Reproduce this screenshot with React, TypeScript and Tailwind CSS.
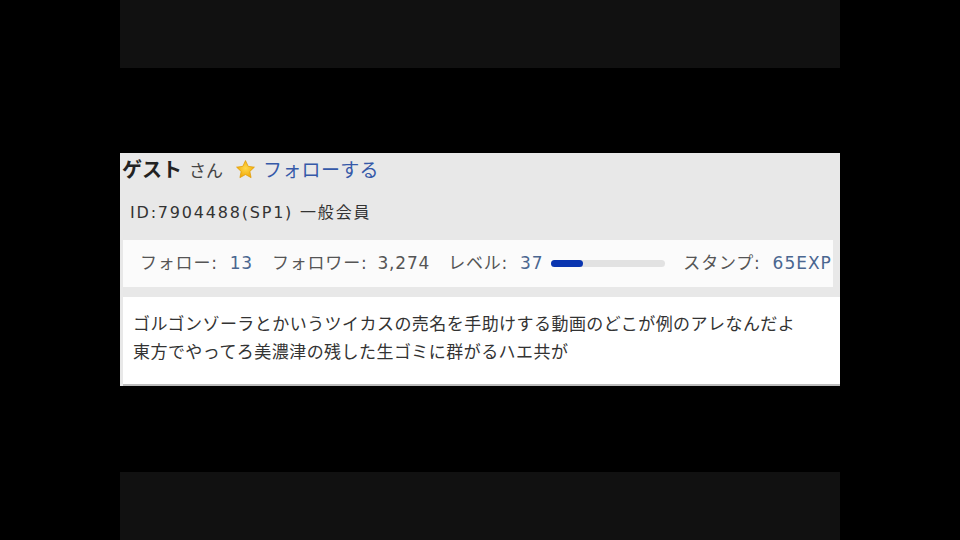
const jp = { fontFamily: '"DejaVu Sans", "Noto Sans CJK JP", sans-serif' };

function Star() {
  return (
    <svg width="21" height="21" viewBox="0 0 24 24" className="shrink-0">
      <defs>
        <radialGradient id="starFill" cx="50%" cy="45%" r="60%">
          <stop offset="0%" stopColor="#ffd84a" />
          <stop offset="100%" stopColor="#f0a400" />
        </radialGradient>
      </defs>
      <path
        d="M12 1.8l3.1 6.6 7.1.9-5.2 4.9 1.4 7.1L12 17.8l-6.4 3.5 1.4-7.1-5.2-4.9 7.1-.9z"
        fill="url(#starFill)"
        stroke="#e09a00"
        strokeWidth="0.8"
        strokeLinejoin="round"
      />
    </svg>
  );
}

export default function App() {
  return (
    <div className="flex h-[540px] w-[960px] flex-col items-center bg-black" style={jp}>
      <div className="h-[68px] w-[720px] bg-[#111111]" />
      <div className="h-[85px]" />

      <div className="flex h-[233px] w-[720px] flex-col bg-[#e8e8e8]">
        <div className="flex h-[30px] items-end pl-[2px]">
          <span className="text-[20px] leading-[26px] font-bold text-[#222]">ゲスト</span>
          <span className="ml-[7px] text-[17px] leading-[24px] text-[#444]">さん</span>
          <span className="ml-[12px] mb-[3px]">
            <Star />
          </span>
          <span className="ml-[7px] text-[19px] leading-[25px] tracking-[0.3px] text-[#3559a8]">フォローする</span>
        </div>

        <div className="mt-[20px] pl-[10px] text-[16px] leading-[20px] tracking-[1.8px] text-[#333]">
          ID:7904488(SP1) 一般会員
        </div>

        <div className="mt-[17px] ml-[3px] mr-[7px] flex h-[47px] items-center overflow-hidden whitespace-nowrap bg-[#fbfbfb] pl-[17px] text-[17px] tracking-[0.8px] text-[#555]">
          <span className="shrink-0">フォロー:</span>
          <span className="ml-[12px] shrink-0 text-[#4a6690]">13</span>
          <span className="ml-[19px] shrink-0">フォロワー:</span>
          <span className="ml-[10px] shrink-0">3,274</span>
          <span className="ml-[18px] shrink-0">レベル:</span>
          <span className="ml-[12px] shrink-0 text-[#4a6690]">37</span>
          <div className="ml-[8px] h-[7px] w-[114px] shrink-0 rounded-full bg-[#e2e2e2]">
            <div className="h-[7px] w-[32px] rounded-full bg-[#0a35b0]" />
          </div>
          <span className="ml-[18px] shrink-0">スタンプ:</span>
          <span className="ml-[12px] shrink-0 tracking-[1px] text-[#4a6690]">65EXP</span>
        </div>

        <div className="mt-[10px] ml-[3px] flex-1 border-b-2 border-[#bdbdbd] bg-white pl-[10px] pt-[13px] text-[17px] leading-[28px] tracking-[0.45px] text-[#333]">
          <div>ゴルゴンゾーラとかいうツイカスの売名を手助けする動画のどこが例のアレなんだよ</div>
          <div>東方でやってろ美濃津の残した生ゴミに群がるハエ共が</div>
        </div>
      </div>

      <div className="h-[86px]" />
      <div className="h-[68px] w-[720px] bg-[#111111]" />
    </div>
  );
}
